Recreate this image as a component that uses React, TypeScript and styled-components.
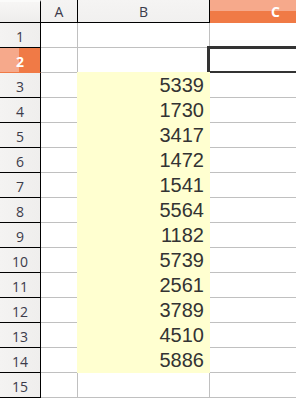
import React from 'react';
import styled, { createGlobalStyle } from 'styled-components';

const GlobalStyle = createGlobalStyle`
  body {
    margin: 0;
    background: #ffffff;
    overflow: hidden;
  }
`;

const ORANGE_LIGHT = '#f6a98b';
const ORANGE_DARK = '#f07a46';
const FILL = '#ffffd0';

// the window only shows part of column C
const Viewport = styled.div`
  width: 100vw;
  height: 100vh;
  overflow: hidden;
`;

// sheet grid: row header, A, B, C
const Sheet = styled.div`
  display: grid;
  grid-template-columns: 41px 37px 132px 132px;
  grid-auto-rows: 25px;
  grid-template-rows: 23px;
  width: 342px;
  font-family: 'Liberation Sans', Arial, sans-serif;
`;

const Corner = styled.div`
  box-sizing: border-box;
  border-right: 1px solid #000;
  border-bottom: 1px solid #000;
  background: linear-gradient(to bottom, #f7f6f5 0%, #f2f1f0 55%, #eeedec 100%);
  border-top: 2px solid #fbfbfa;
`;

const ColHeader = styled.div<{ $active?: boolean }>`
  box-sizing: border-box;
  display: flex;
  align-items: center;
  justify-content: center;
  font-family: 'Open Sans', 'DejaVu Sans', sans-serif;
  font-size: 14px;
  padding-top: 1px;
  color: ${p => (p.$active ? '#ffffff' : '#3b3b4a')};
  font-weight: ${p => (p.$active ? 700 : 400)};
  background: ${p =>
    p.$active
      ? `linear-gradient(to bottom, ${ORANGE_LIGHT} 0 52%, ${ORANGE_DARK} 52% 100%)`
      : 'linear-gradient(to bottom, #f5f4f3 0%, #f1f0ef 100%)'};
  border-right: 1px solid ${p => (p.$active ? ORANGE_DARK : '#000')};
  border-bottom: 1px solid ${p => (p.$active ? ORANGE_DARK : '#000')};
`;

const RowHeader = styled.div<{ $active?: boolean }>`
  box-sizing: border-box;
  display: flex;
  align-items: center;
  justify-content: center;
  padding-top: 2px;
  font-family: 'Open Sans', 'DejaVu Sans', sans-serif;
  font-size: 14px;
  color: ${p => (p.$active ? '#ffffff' : '#3b3b4a')};
  font-weight: ${p => (p.$active ? 700 : 400)};
  background: ${p =>
    p.$active
      ? `linear-gradient(to right, ${ORANGE_LIGHT} 0 19px, ${ORANGE_DARK} 19px 100%)`
      : 'linear-gradient(to right, #f4f3f2 0%, #efeeed 100%)'};
  border-right: 1px solid #000;
  border-bottom: 1px solid ${p => (p.$active ? ORANGE_DARK : '#000')};
`;

// a filled cell grows over the grid lines above and to its left
const Cell = styled.div<{ $filled?: boolean }>`
  position: relative;
  box-sizing: border-box;
  display: flex;
  align-items: center;
  justify-content: flex-end;
  padding-right: 5px;
  font-size: 20px;
  line-height: 24px;
  color: #333333;
  background: ${p => (p.$filled ? FILL : '#ffffff')};
  border-right: 1px solid ${p => (p.$filled ? FILL : '#c0c0c0')};
  border-bottom: 1px solid ${p => (p.$filled ? FILL : '#c0c0c0')};
  margin: ${p => (p.$filled ? '-1px 0 0 -1px' : '0')};
  padding-top: ${p => (p.$filled ? '1px' : '0')};
`;

const Cursor = styled.div`
  position: absolute;
  top: -2px;
  left: -3px;
  right: -4px;
  height: 28px;
  box-sizing: border-box;
  border: 3px solid #333333;
`;

const values = [5339, 1730, 3417, 1472, 1541, 5564, 1182, 5739, 2561, 3789, 4510, 5886];

export default function App() {
  const rows = Array.from({ length: 15 }, (_, i) => i + 1);

  return (
    <>
      <GlobalStyle />
      <Viewport>
        <Sheet>
          <Corner />
          <ColHeader>A</ColHeader>
          <ColHeader>B</ColHeader>
          <ColHeader $active>C</ColHeader>
          {rows.map(r => {
            const v = r >= 3 && r <= 14 ? values[r - 3] : undefined;
            return (
              <React.Fragment key={r}>
                <RowHeader $active={r === 2}>{r}</RowHeader>
                <Cell />
                <Cell $filled={v !== undefined}>{v}</Cell>
                <Cell>{r === 2 && <Cursor />}</Cell>
              </React.Fragment>
            );
          })}
        </Sheet>
      </Viewport>
    </>
  );
}
